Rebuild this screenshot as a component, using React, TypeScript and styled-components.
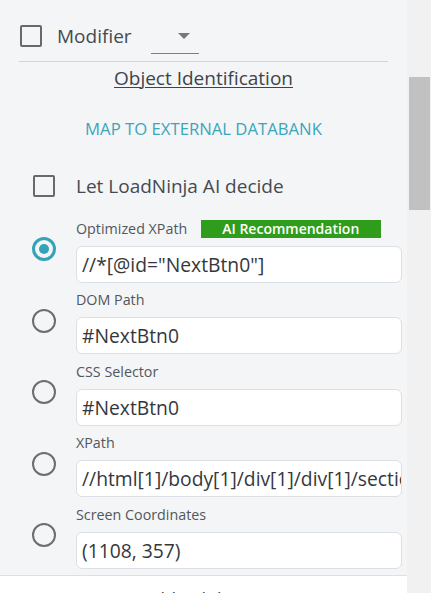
import React from 'react';
import styled, { createGlobalStyle, css } from 'styled-components';

const GlobalStyle = createGlobalStyle`
  html, body {
    margin: 0;
    padding: 0;
    background: #f4f5f7;
  }
  body {
    font-family: 'Open Sans', 'Noto Sans', sans-serif;
    color: #444a50;
  }
`;

const Screen = styled.div`
  display: flex;
  width: 431px;
  height: 593px;
  overflow: hidden;
`;

const Panel = styled.div`
  width: 407px;
  height: 593px;
  overflow: hidden;
  background: #f4f5f7;
`;

const Track = styled.div`
  flex: 1;
  background: #f1f1f1;
  padding: 77px 1px 0 2px;
`;

const Thumb = styled.div`
  height: 133px;
  background: #c1c1c1;
`;

const TopSection = styled.div`
  padding: 17.5px 19px 0 19px;
`;

const ModifierRow = styled.div`
  display: flex;
  align-items: center;
  height: 36px;
  padding-left: 1px;
`;

const Checkbox = styled.span`
  display: inline-block;
  box-sizing: border-box;
  width: 22px;
  height: 22px;
  border: 2px solid #676a6d;
  border-radius: 2px;
  background: transparent;
  flex-shrink: 0;
`;

const CheckLabel = styled.span<{ $gap: number }>`
  margin-left: ${(p) => p.$gap}px;
  font-size: 19px;
  line-height: 24px;
  color: #454a50;
`;

const Select = styled.div`
  box-sizing: border-box;
  width: 48px;
  height: 36px;
  margin-left: 19px;
  border-bottom: 1px solid #7d7f82;
  display: flex;
  align-items: center;
  justify-content: flex-end;
  padding-right: 9px;

  &::after {
    content: '';
    width: 0;
    height: 0;
    border-left: 6.5px solid transparent;
    border-right: 6.5px solid transparent;
    border-top: 6px solid #76797c;
    margin-top: 1px;
  }
`;

const Divider = styled.div`
  height: 1px;
  background: #d3d5d8;
  margin-top: 7.5px;
`;

const Title = styled.div`
  margin-top: 3.5px;
  text-align: center;
  font-size: 19px;
  line-height: 24px;
  color: #3f444a;
  text-decoration: underline;
  text-underline-offset: 2px;
  text-decoration-thickness: 1px;
`;

const DataLink = styled.div`
  margin-top: 28px;
  text-align: center;
  font-size: 16.7px;
  line-height: 21px;
  color: #3ba6bb;
  text-transform: uppercase;
`;

const OptionSection = styled.div`
  padding: 35px 5px 6px 32px;
`;

const DecideRow = styled.div`
  display: grid;
  grid-template-columns: 24px 1fr;
  column-gap: 20px;
  align-items: center;
  height: 22px;
  margin-bottom: 24px;

  ${Checkbox} {
    margin-left: 1px;
  }
`;

const OptionRow = styled.div`
  display: grid;
  grid-template-columns: 24px 1fr;
  column-gap: 20px;
  align-items: center;

  & + & {
    margin-top: 8.5px;
  }
`;

const Radio = styled.span<{ $checked?: boolean }>`
  box-sizing: border-box;
  width: 24px;
  height: 24px;
  border-radius: 50%;
  margin-bottom: 4px;
  display: flex;
  align-items: center;
  justify-content: center;
  ${(p) =>
    p.$checked
      ? css`
          border: 3px solid #35a3b7;
          &::after {
            content: '';
            width: 10px;
            height: 10px;
            border-radius: 50%;
            background: #35a3b7;
          }
        `
      : css`
          border: 2px solid #6b6e71;
        `}
`;

const OptionBody = styled.div`
  display: flex;
  flex-direction: column;
  gap: 8px;
  min-width: 0;
`;

const LabelRow = styled.div`
  display: flex;
  align-items: center;
  height: 18px;
`;

const FieldLabel = styled.span`
  font-size: 14.3px;
  line-height: 18px;
  color: #52575c;
`;

const Badge = styled.span`
  margin-left: 13.5px;
  width: 180px;
  height: 18px;
  background: #2f9c1b;
  color: #ffffff;
  font-size: 14px;
  font-weight: 600;
  line-height: 18px;
  text-align: center;
`;

const Field = styled.div`
  box-sizing: border-box;
  height: 37px;
  background: #ffffff;
  border: 1px solid #dcdfe4;
  border-radius: 6px;
  padding: 0 5px;
  display: flex;
  align-items: center;
  font-size: 19.3px;
  color: #34383c;
  white-space: nowrap;
  overflow: hidden;
`;

const Footer = styled.div`
  border-top: 1px solid #dcdfe4;
  background: #ffffff;
  height: 60px;
  padding-top: 11px;
  text-align: center;
  font-size: 18px;
  line-height: 24px;
  color: #454a50;
`;

type Option = {
  label: string;
  value: string;
  checked?: boolean;
  recommended?: boolean;
};

const options: Option[] = [
  { label: 'Optimized XPath', value: '//*[@id="NextBtn0"]', checked: true, recommended: true },
  { label: 'DOM Path', value: '#NextBtn0' },
  { label: 'CSS Selector', value: '#NextBtn0' },
  { label: 'XPath', value: '//html[1]/body[1]/div[1]/div[1]/section[1]/div[2]/button[1]' },
  { label: 'Screen Coordinates', value: '(1108, 357)' },
];

export default function App() {
  return (
    <>
      <GlobalStyle />
      <Screen>
        <Panel>
          <TopSection>
            <ModifierRow>
              <Checkbox />
              <CheckLabel $gap={15}>Modifier</CheckLabel>
              <Select />
            </ModifierRow>
            <Divider />
            <Title>Object Identification</Title>
            <DataLink>Map to External Databank</DataLink>
          </TopSection>
          <OptionSection>
            <DecideRow>
              <Checkbox />
              <CheckLabel $gap={0}>Let LoadNinja AI decide</CheckLabel>
            </DecideRow>
            {options.map((o) => (
              <OptionRow key={o.label}>
                <Radio $checked={o.checked} />
                <OptionBody>
                  <LabelRow>
                    <FieldLabel>{o.label}</FieldLabel>
                    {o.recommended && <Badge>AI Recommendation</Badge>}
                  </LabelRow>
                  <Field>{o.value}</Field>
                </OptionBody>
              </OptionRow>
            ))}
          </OptionSection>
          <Footer>Add Validation</Footer>
        </Panel>
        <Track>
          <Thumb />
        </Track>
      </Screen>
    </>
  );
}
